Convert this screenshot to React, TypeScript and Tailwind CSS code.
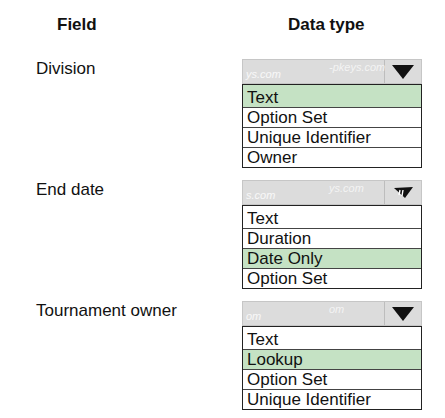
type Field = {
  label: string;
  options: string[];
  selected: string;
  marks: [string, string];
  bent?: boolean;
};

const fields: Field[] = [
  {
    label: 'Division',
    options: ['Text', 'Option Set', 'Unique Identifier', 'Owner'],
    selected: 'Text',
    marks: ['ys.com', '-pkeys.com'],
  },
  {
    label: 'End date',
    options: ['Text', 'Duration', 'Date Only', 'Option Set'],
    selected: 'Date Only',
    marks: ['s.com', 'ys.com'],
    bent: true,
  },
  {
    label: 'Tournament owner',
    options: ['Text', 'Lookup', 'Option Set', 'Unique Identifier'],
    selected: 'Lookup',
    marks: ['om', 'om'],
  },
];

function Arrow({ bent }: { bent?: boolean }) {
  if (bent) {
    return (
      <svg width="22" height="14" viewBox="0 0 22 14">
        <polygon points="2,2 21,1 13,12" fill="#111" />
        <path d="M8 4 L7 9 M11 4 L10 10" stroke="#fff" strokeWidth="1.4" />
      </svg>
    );
  }
  return (
    <svg width="22" height="14" viewBox="0 0 22 14">
      <polygon points="0,0 22,0 11,14" fill="#111" />
    </svg>
  );
}

function Dropdown({ field }: { field: Field }) {
  return (
    <div className="w-[180px]">
      {/* closed select bar, faint stamp text over it */}
      <div className="relative flex h-[25px] border border-[#c6c6c6] bg-[#dcdcdc]">
        <div className="flex-1" />
        <div className="flex w-[37px] items-center justify-center border-l border-[#bdbdbd]">
          <Arrow bent={field.bent} />
        </div>
        <span className="absolute left-[3px] top-[8px] text-[11px] leading-[13px] italic text-white/80">
          {field.marks[0]}
        </span>
        <span className="absolute left-[86px] top-[1px] text-[11px] leading-[13px] italic text-white/70">
          {field.marks[1]}
        </span>
      </div>
      {/* option list */}
      <div className="border border-[#222] bg-white">
        {field.options.map((opt, i) => (
          <div
            key={opt}
            className={`pl-[4px] leading-[19px] ${i === 0 ? 'pt-[3px]' : 'border-t border-[#444]'} ${
              opt === field.selected ? 'bg-[#c5e2c4]' : ''
            }`}
          >
            {opt}
          </div>
        ))}
      </div>
    </div>
  );
}

export default function App() {
  return (
    <div className="h-[418px] w-[445px] bg-white pl-[36px] pt-[15px] font-['Liberation_Sans',Arial,sans-serif] text-[17px] text-[#111]">
      <div className="grid grid-cols-[206px_180px] font-bold leading-[20px]">
        <div className="pl-[21px]">Field</div>
        <div className="pl-[46px]">Data type</div>
      </div>

      <div className="mt-[24px] flex flex-col gap-[12px]">
        {fields.map((f) => (
          <div key={f.label} className="grid grid-cols-[206px_180px]">
            <div className="leading-[20px]">{f.label}</div>
            <Dropdown field={f} />
          </div>
        ))}
      </div>
    </div>
  );
}
